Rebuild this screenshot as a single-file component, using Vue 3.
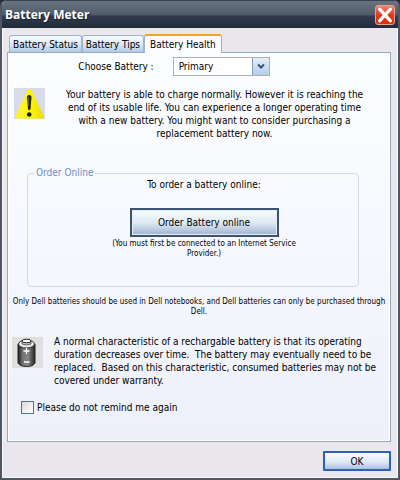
<script setup>
import { ref } from "vue"

const tabs = ["Battery Status", "Battery Tips", "Battery Health"]
const activeTab = ref("Battery Health")

const batteries = ["Primary", "Secondary"]
const selectedBattery = ref("Primary")
const dontRemind = ref(false)
</script>

<template>
  <div class="window">
    <header class="titlebar">
      <h1>Battery Meter</h1>
      <button class="close" type="button" aria-label="Close">
        <svg viewBox="0 0 20 20" width="20" height="20">
          <path d="M4 3.500L16 16.500M16 3.500L4 16.500" stroke="#fff" stroke-width="3.600" stroke-linecap="round" />
        </svg>
      </button>
    </header>

    <main class="body">
      <nav class="tabs">
        <button
          v-for="tab in tabs"
          :key="tab"
          type="button"
          class="tab"
          :class="{ active: tab === activeTab }"
          @click="activeTab = tab"
        >
          {{ tab }}
        </button>
      </nav>

      <section class="panel">
        <div class="choose">
          <label for="battery-select">Choose Battery :</label>
          <div class="select-wrap">
            <select id="battery-select" v-model="selectedBattery">
              <option v-for="battery in batteries" :key="battery">{{ battery }}</option>
            </select>
            <span class="arrow">
              <svg viewBox="0 0 16 16" width="16" height="16">
                <path d="M5 6.500L8 9.500L11 6.500" fill="none" stroke="#3d4f6b" stroke-width="2" />
              </svg>
            </span>
          </div>
        </div>

        <div class="message warning">
          <svg class="icon" viewBox="0 0 31 31" width="31" height="31">
            <defs>
              <linearGradient id="warn" x1="0" x2="1" y1="0" y2="0">
                <stop offset="0" stop-color="#fff04a" />
                <stop offset="0.5" stop-color="#fff800" />
                <stop offset="1" stop-color="#eed900" />
              </linearGradient>
            </defs>
            <rect width="31" height="31" fill="#d9dbe8" />
            <path d="M14 1.500Q15.500 0 17 1.500L30 28.500Q30 30 28.500 30.500H2.500Q1 30 1 28.500Z" fill="url(#warn)" />
            <path d="M13 9Q13 7 15 7Q17.500 7 17.500 9L16.500 21Q15.300 23.500 14 21Z" fill="#252518" />
            <path d="M14.600 9V18" stroke="#77775a" stroke-width="0.800" />
            <circle cx="15.200" cy="26.500" r="2.300" fill="#1b1b0c" />
          </svg>
          <p>
            Your battery is able to charge normally. However it is reaching the<br />
            end of its usable life. You can experience a longer operating time<br />
            with a new battery. You might want to consider purchasing a<br />
            replacement battery now.
          </p>
        </div>

        <fieldset class="order">
          <legend>Order Online</legend>
          <div class="order-content">
            <p>To order a battery online:</p>
            <button class="order-button" type="button">Order Battery online</button>
            <p class="small">
              (You must first be connected to an Internet Service<br />
              Provider.)
            </p>
          </div>
        </fieldset>

        <p class="small notice">
          Only Dell batteries should be used in Dell notebooks, and Dell batteries can only be purchased through<br />
          Dell.
        </p>

        <div class="message warranty">
          <svg class="icon" viewBox="0 0 31 31" width="31" height="31">
            <defs>
              <linearGradient id="cell" x1="0" x2="1" y1="0" y2="0">
                <stop offset="0" stop-color="#1e1e1e" />
                <stop offset="0.300" stop-color="#777" />
                <stop offset="0.600" stop-color="#858585" />
                <stop offset="1" stop-color="#242424" />
              </linearGradient>
            </defs>
            <rect width="31" height="31" fill="#e0e0e1" />
            <path d="M6 7V26Q8 29.500 14.500 29.500Q21 29.500 23 26V7Z" fill="url(#cell)" stroke="#222" />
            <ellipse cx="14.500" cy="7" rx="8" ry="4" fill="#e8e8e8" stroke="#333" />
            <path d="M10 4V7Q14.500 9 19 7V4Z" fill="#ccc" stroke="#444" stroke-width="0.800" />
            <ellipse cx="14.500" cy="4" rx="4.500" ry="1.800" fill="#fff" stroke="#222" />
            <path d="M14.500 11V17M11.500 14H17.500M12 25H17.500" stroke="#fff" stroke-width="1.300" />
          </svg>
          <p>
            A normal characteristic of a rechargable battery is that its operating<br />
            duration decreases over time.&nbsp; The battery may eventually need to be<br />
            replaced.&nbsp; Based on this characteristic, consumed batteries may not be<br />
            covered under warranty.
          </p>
        </div>

        <div class="remind">
          <input id="remind" v-model="dontRemind" type="checkbox" />
          <label for="remind">Please do not remind me again</label>
        </div>
      </section>

      <footer class="footer">
        <button class="ok" type="button">OK</button>
      </footer>
    </main>
  </div>
</template>

<style>
body {
  margin: 0;
  background: #25263f;
}
</style>

<style scoped>
.window {
  box-sizing: border-box;
  min-height: 100vh;
  display: flex;
  flex-direction: column;
  border: 2px solid #4f5664;
  border-top: 1px solid #3a424d;
  border-radius: 6px 6px 0 0;
  background: #e9e7eb;
  color: #000;
  font-family: "DejaVu Sans Condensed", "DejaVu Sans", sans-serif;
  font-size: 10px;
  line-height: 13px;
  overflow: hidden;
}

button,
select {
  margin: 0;
  font: inherit;
  color: inherit;
}

p {
  margin: 0;
}

.titlebar {
  display: flex;
  align-items: center;
  justify-content: space-between;
  height: 27px;
  padding: 0 3px;
  background: linear-gradient(#68737f, #515d6a 50%, #303c4d 56%, #202a3a);
}

.titlebar h1 {
  margin: 0;
  color: #fff;
  font-family: "Open Sans", sans-serif;
  font-size: 12px;
  line-height: 20px;
  font-weight: 700;
  text-shadow: 1px 1px 1px #1b2432;
}

.close {
  width: 20px;
  height: 20px;
  padding: 0;
  border: 1px solid #e7a194;
  border-radius: 3px;
  background: linear-gradient(#ee8370, #e23a1c 50%, #e62b0b);
}

.close svg {
  display: block;
  width: 18px;
  height: 18px;
}

.body {
  flex: 1;
  display: flex;
  flex-direction: column;
  padding: 6px 6px 6px 4px;
  border: 1px solid #f8f8fb;
  border-top: 0;
}

.tabs {
  display: flex;
  align-items: flex-end;
  padding-left: 2px;
}

.tab {
  height: 17px;
  padding: 1px 3px 0;
  white-space: nowrap;
  border: 1px solid #9bb5d2;
  border-bottom: 0;
  border-radius: 3px 3px 0 0;
  background: linear-gradient(#fafcff, #dde9f7 50%, #b0cae8);
}

.tab.active {
  position: relative;
  height: 19px;
  margin-bottom: -1px;
  padding: 0 5px 1px;
  border-top: 2px solid #f0a12e;
  background: #fcfdff;
}

.panel {
  flex: 1;
  padding: 4px 4px 12px;
  border: 1px solid #97a9bf;
  box-shadow: inset 0 0 0 1px #fff;
  background: linear-gradient(#fcfdff, #f7f8fe 50%, #edf0fa);
}

.choose {
  display: flex;
  align-items: center;
  justify-content: center;
  gap: 19px;
  padding-right: 50px;
}

.select-wrap {
  position: relative;
  width: 97px;
}

.select-wrap select {
  display: block;
  box-sizing: border-box;
  width: 100%;
  height: 19px;
  padding: 0 20px 0 5px;
  appearance: none;
  border: 1px solid #a9b0b8;
  border-radius: 0;
  background: #fff;
}

.arrow {
  position: absolute;
  top: 1px;
  right: 1px;
  width: 16px;
  height: 17px;
  background: linear-gradient(#e3effb, #b4cce9);
  box-shadow: -1px 0 #879bb4;
  pointer-events: none;
}

.message {
  display: flex;
}

.icon {
  flex: none;
}

.warning {
  margin-top: 12px;
  padding: 0 2px;
}

.warning p {
  flex: 1;
  text-align: center;
  white-space: nowrap;
}

.order {
  margin: 28px 27px 0 15px;
  padding: 0 0 27px 6px;
  border: 1px solid #d6d8df;
  border-radius: 4px;
}

.order legend {
  padding: 0 2px;
  color: #6c8dc8;
  line-height: 10px;
}

.order-content {
  padding-left: 16px;
  text-align: center;
}

.order-button {
  width: 149px;
  height: 29px;
  margin: 17px 0 2px;
  padding: 0;
  border: 2px solid #3c5273;
  box-shadow: inset 0 0 0 1px #e6eef8;
  background: linear-gradient(#f7fbfd, #dfeaf3 50%, #9fb3d3);
}

.small {
  font-size: 8px;
  line-height: 10px;
}

.notice {
  margin-top: 10px;
  text-align: center;
  white-space: nowrap;
}

.warranty {
  gap: 11px;
  margin-top: 18px;
}

.warranty .icon {
  margin-top: 2px;
}

.warranty p {
  white-space: nowrap;
}

.remind {
  display: flex;
  align-items: center;
  gap: 3px;
  margin-top: 14px;
  padding-left: 9px;
}

.remind input {
  width: 13px;
  height: 13px;
  margin: 0;
  appearance: none;
  border: 1px solid #507594;
  background: linear-gradient(135deg, #d9d9d7, #fff);
}

.remind input:checked {
  background: #507594;
}

.footer {
  display: flex;
  justify-content: flex-end;
  padding-top: 9px;
}

.ok {
  width: 68px;
  height: 20px;
  padding: 0;
  border: 2px solid #2e60b5;
  border-radius: 1px;
  background: linear-gradient(#fafdff, #dfe9f4 55%, #abc2df);
}
</style>
